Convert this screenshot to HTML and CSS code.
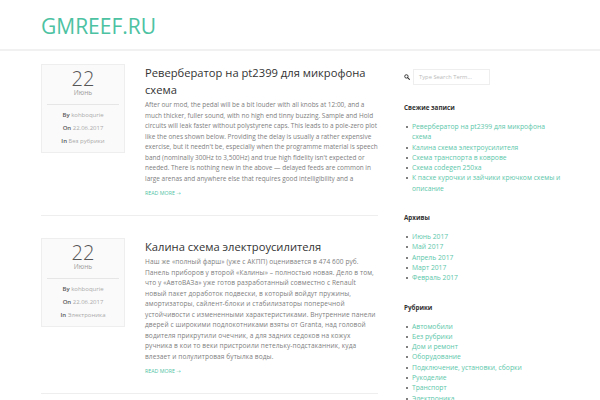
FILE: index.html
```html
<!DOCTYPE html>
<html lang="ru">
<head>
<meta charset="utf-8">
<title>GMREEF.RU</title>
<link rel="stylesheet" href="styles.css">
</head>
<body>
<header class="site-header">
  <a class="logo" href="#">GMREEF.RU</a>
</header>
<div class="page">
  <main class="content">
    <article class="post">
      <div class="date-box">
        <div class="date-top">
          <div class="day">22</div>
          <div class="month">Июнь</div>
        </div>
        <div class="meta">
          <div><b>By</b> <span>kohboqurie</span></div>
          <div><b>On</b> <span>22.06.2017</span></div>
          <div><b>In</b> <span>Без рубрики</span></div>
        </div>
      </div>
      <div class="post-body">
        <h2 class="post-title">Ревербератор на pt2399 для микрофона схема</h2>
        <p class="excerpt">After our mod, the pedal will be a bit louder with all knobs at 12:00, and a much thicker, fuller sound, with no high end tinny buzzing. Sample and Hold circuits will leak faster without polystyrene caps. This leads to a pole-zero plot like the ones shown below. Providing the delay is usually a rather expensive exercise, but it needn't be, especially when the programme material is speech band (nominally 300Hz to 3,500Hz) and true high fidelity isn't expected or needed. There is nothing new in the above — delayed feeds are common in large arenas and anywhere else that requires good intelligibility and a</p>
        <a class="more" href="#">READ MORE →</a>
      </div>
    </article>
    <article class="post">
      <div class="date-box">
        <div class="date-top">
          <div class="day">22</div>
          <div class="month">Июнь</div>
        </div>
        <div class="meta">
          <div><b>By</b> <span>kohboqurie</span></div>
          <div><b>On</b> <span>22.06.2017</span></div>
          <div><b>In</b> <span>Электроника</span></div>
        </div>
      </div>
      <div class="post-body">
        <h2 class="post-title">Калина схема электроусилителя</h2>
        <p class="excerpt excerpt-ru">Наш же «полный фарш» (уже с АКПП) оценивается в 474 600 руб. Панель приборов у второй «Калины» – полностью новая. Дело в том, что у «АвтоВАЗа» уже готов разработанный совместно с Renault новый пакет доработок подвески, в который войдут пружины, амортизаторы, сайлент-блоки и стабилизаторы поперечной устойчивости с измененными характеристиками. Внутренние панели дверей с широкими подлокотниками взяты от Granta, над головой водителя прикрутили очечник, а для задних седоков на кожух ручника в кои то веки пристроили петельку-подстаканник, куда влезает и полулитровая бутылка воды.</p>
        <a class="more" href="#">READ MORE →</a>
      </div>
    </article>
  </main>
  <aside class="sidebar">
    <div class="search">
      <svg class="search-icon" viewBox="0 0 10 10" width="6" height="6"><circle cx="4" cy="4" r="2.8" fill="none" stroke="#333" stroke-width="1.6"/><line x1="6" y1="6" x2="9" y2="9" stroke="#333" stroke-width="1.8" stroke-linecap="round"/></svg>
      <div class="search-input">Type Search Term...</div>
    </div>
    <section class="widget">
      <h3 class="widget-title">Свежие записи</h3>
      <ul>
        <li><a href="#">Ревербератор на pt2399 для микрофона схема</a></li>
        <li><a href="#">Калина схема электроусилителя</a></li>
        <li><a href="#">Схема транспорта в коврове</a></li>
        <li><a href="#">Схема codegen 250xa</a></li>
        <li><a href="#">К пасхе курочки и зайчики крючком схемы и описание</a></li>
      </ul>
    </section>
    <section class="widget">
      <h3 class="widget-title">Архивы</h3>
      <ul>
        <li><a href="#">Июнь 2017</a></li>
        <li><a href="#">Май 2017</a></li>
        <li><a href="#">Апрель 2017</a></li>
        <li><a href="#">Март 2017</a></li>
        <li><a href="#">Февраль 2017</a></li>
      </ul>
    </section>
    <section class="widget">
      <h3 class="widget-title">Рубрики</h3>
      <ul>
        <li><a href="#">Автомобили</a></li>
        <li><a href="#">Без рубрики</a></li>
        <li><a href="#">Дом и ремонт</a></li>
        <li><a href="#">Оборудование</a></li>
        <li><a href="#">Подключение, установки, сборки</a></li>
        <li><a href="#">Рукоделие</a></li>
        <li><a href="#">Транспорт</a></li>
        <li><a href="#">Электроника</a></li>
      </ul>
    </section>
  </aside>
</div>
</body>
</html>
```
FILE: styles.css
```css
html, body {
  margin: 0;
  padding: 0;
  background: #fff;
}
body {
  font-family: "Open Sans", "Noto Sans", "DejaVu Sans", sans-serif;
  color: #808080;
  overflow: hidden;
}
a { text-decoration: none; }

.site-header {
  height: 49px;
  border-bottom: 2px solid #f1f1f1;
  padding-left: 41px;
  display: flex;
  align-items: center;
}
.logo {
  color: #4cc2a2;
  font-size: 21px;
  margin-top: 2px;
}

.page {
  display: flex;
  padding-left: 41px;
  padding-top: 13px;
}
.content {
  width: 337px;
}
.post {
  display: flex;
  align-items: flex-start;
  border-bottom: 1px solid #eee;
  padding-bottom: 17px;
  margin-bottom: 22px;
}
.date-box {
  width: 82px;
  flex: none;
  background: #fafafa;
  border: 1px solid #eee;
  margin-right: 20px;
  text-align: center;
}
.date-top {
  margin: 0 5px;
  padding: 4px 0 8px;
  border-bottom: 1px solid #e6e6e6;
}
.day {
  font-size: 20px;
  line-height: 20px;
  font-weight: 300;
  color: #555;
}
.month {
  font-size: 6.5px;
  line-height: 7px;
  color: #999;
}
.meta {
  padding: 4px 0 4px;
  font-size: 6px;
  line-height: 13px;
  color: #aaa;
}
.meta b {
  color: #555;
  font-weight: 600;
}

.post-body {
  width: 233px;
}
.post-title {
  margin: 0;
  font-size: 11.2px;
  line-height: 17px;
  font-weight: 400;
  color: #333;
}
.excerpt {
  margin: 2px 0 0;
  font-size: 6.45px;
  line-height: 10.5px;
  color: #808080;
}
.excerpt-ru {
  font-size: 6.55px;
  letter-spacing: 0.1px;
}
.more {
  display: block;
  margin-top: 4px;
  font-size: 5.3px;
  line-height: 10px;
  color: #4fc3a4;
}

.sidebar {
  width: 159px;
  margin-left: 26px;
  padding-top: 5px;
}
.search {
  display: flex;
  align-items: center;
  margin-bottom: 18px;
}
.search-icon {
  margin-right: 3px;
}
.search-input {
  width: 70px;
  height: 14px;
  border: 1px solid #eee;
  padding-left: 5px;
  font-size: 5.8px;
  line-height: 14px;
  color: #bbb;
}
.widget {
  margin-bottom: 19px;
}
.widget-title {
  margin: 0 0 9px;
  font-size: 6.3px;
  line-height: 10px;
  font-weight: 700;
  color: #333;
}
.widget ul {
  margin: 0;
  padding: 0;
  list-style: none;
}
.widget li {
  position: relative;
  padding-left: 8px;
  font-size: 6.75px;
  line-height: 10.3px;
}
.widget li::before {
  content: "";
  position: absolute;
  left: 2px;
  top: 4px;
  width: 2px;
  height: 2px;
  border-radius: 50%;
  background: #555;
}
.widget li a {
  color: #5cc7aa;
}
```
